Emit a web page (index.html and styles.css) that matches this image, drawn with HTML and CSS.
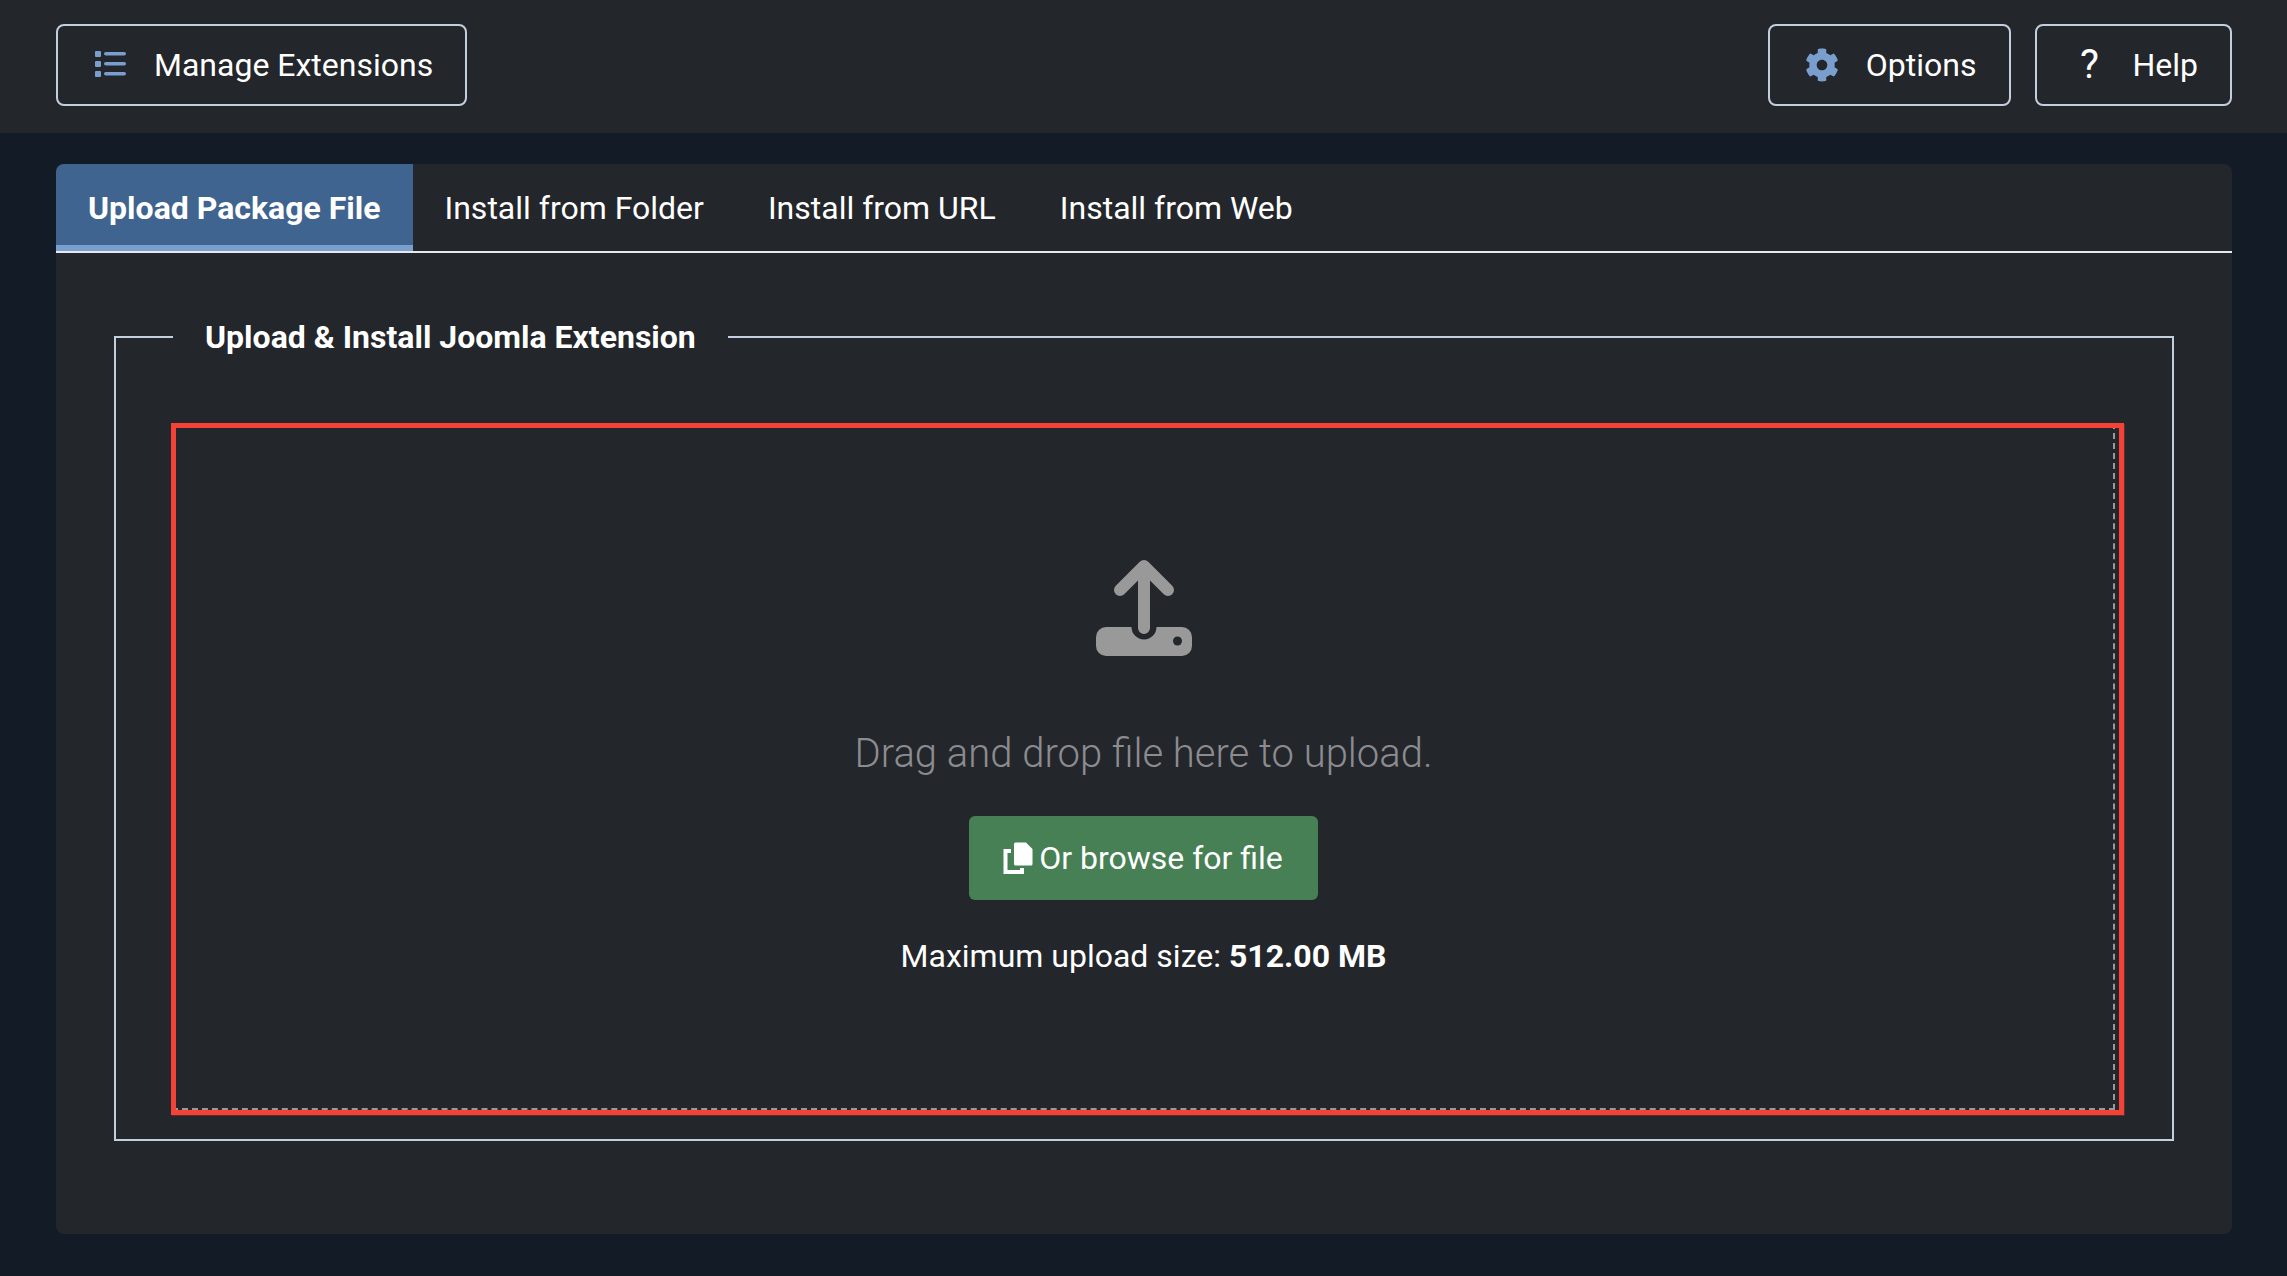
FILE: index.html
```html
<!DOCTYPE html>
<html lang="en">
<head>
<meta charset="utf-8">
<title>Extensions: Install</title>
<link rel="stylesheet" href="styles.css">
</head>
<body>
<header class="toolbar">
  <a class="btn btn-manage" href="#">
    <svg class="btn-icon" viewBox="0 0 40 34"><g class="icon-fill"><rect x="5" y="3" width="6" height="6" rx="1"/><rect x="5" y="13" width="6" height="6" rx="1"/><rect x="5" y="23" width="6" height="6" rx="1"/><rect x="14" y="4" width="22" height="3.600" rx="1.800"/><rect x="14" y="14" width="22" height="3.600" rx="1.800"/><rect x="14" y="24" width="22" height="3.600" rx="1.800"/></g></svg>
    <span>Manage Extensions</span>
  </a>
  <div class="toolbar-right">
    <a class="btn" href="#">
      <svg class="btn-icon" viewBox="0 0 512 512"><path class="icon-fill" d="M487.4 315.7l-42.6-24.6c4.3-23.2 4.3-47 0-70.2l42.6-24.6c4.9-2.8 7.1-8.6 5.5-14-11.1-35.6-30-67.8-54.7-94.6-3.8-4.1-10-5.1-14.8-2.3L380.8 110c-17.9-15.4-38.5-27.3-60.8-35.1V25.8c0-5.6-3.9-10.5-9.4-11.7-36.7-8.2-74.3-7.8-109.2 0-5.5 1.2-9.4 6.1-9.4 11.7V75c-22.2 7.9-42.8 19.8-60.8 35.1L88.7 85.5c-4.9-2.8-11-1.9-14.8 2.3-24.7 26.7-43.6 58.9-54.7 94.6-1.7 5.4.6 11.2 5.5 14L67.3 221c-4.3 23.2-4.3 47 0 70.2l-42.6 24.6c-4.9 2.8-7.1 8.6-5.5 14 11.1 35.6 30 67.8 54.7 94.6 3.8 4.1 10 5.1 14.8 2.3l42.6-24.6c17.9 15.4 38.5 27.3 60.8 35.1v49.2c0 5.6 3.9 10.5 9.4 11.7 36.7 8.2 74.3 7.8 109.2 0 5.5-1.2 9.4-6.1 9.4-11.7v-49.2c22.2-7.9 42.8-19.8 60.8-35.1l42.6 24.6c4.9 2.8 11 1.9 14.8-2.3 24.7-26.7 43.6-58.9 54.7-94.6 1.500-5.500-.7-11.300-5.600-14.100zM256 336c-44.100 0-80-35.900-80-80s35.900-80 80-80 80 35.900 80 80-35.900 80-80 80z"/></svg>
      <span>Options</span>
    </a>
    <a class="btn btn-help" href="#">
      <span class="btn-icon help-mark">?</span>
      <span>Help</span>
    </a>
  </div>
</header>
<main class="page">
  <section class="card">
    <nav class="tabs">
      <a class="tab tab-active" href="#">Upload Package File</a>
      <a class="tab" href="#">Install from Folder</a>
      <a class="tab" href="#">Install from URL</a>
      <a class="tab" href="#">Install from Web</a>
    </nav>
    <fieldset class="group">
      <legend class="group-title">Upload &amp; Install Joomla Extension</legend>
      <div class="dropzone">
        <svg class="upload-icon" viewBox="0 0 96 96">
          <rect class="upload-fill" x="0" y="67" width="96" height="29" rx="10"/>
          <circle class="upload-cut" cx="48" cy="67" r="12.500"/>
          <circle class="upload-cut" cx="81.500" cy="81" r="4.500"/>
          <path class="upload-stroke" d="M48 68V7M24 30L48 6l24 24"/>
        </svg>
        <p class="drop-text">Drag and drop file here to upload.</p>
        <button class="browse" type="button">
          <svg class="browse-icon" viewBox="0 0 30 32"><path class="browse-fill" d="M11 2a1.500 1.500 0 0 1 1.500-1.500H23l6.500 6.500v15a1.500 1.500 0 0 1-1.500 1.500H12.500A1.500 1.500 0 0 1 11 22z"/><path class="browse-line" d="M8 9H2.500v21h16.500v-4"/></svg>
          <span>Or browse for file</span>
        </button>
        <p class="max-size">Maximum upload size: <strong>512.00 MB</strong></p>
        <div class="highlight"></div>
      </div>
    </fieldset>
  </section>
</main>
</body>
</html>
```
FILE: styles.css
```css
* { box-sizing: border-box; }
html, body { margin: 0; height: 100%; }
body {
  background: #121b26;
  color: #fff;
  font-family: Roboto, "Liberation Sans", sans-serif;
  font-size: 32px;
  overflow: hidden;
}
a { color: inherit; text-decoration: none; }

.toolbar {
  display: flex;
  justify-content: space-between;
  align-items: flex-start;
  height: 133px;
  padding: 24px 55px 0 56px;
  background: #23262b;
}
.toolbar-right { display: flex; gap: 24px; }
.btn {
  display: flex;
  align-items: center;
  height: 82px;
  padding: 0 33px 0 32px;
  border: 2px solid #c3cfdf;
  border-radius: 8px;
  line-height: 48px;
  white-space: nowrap;
}
.btn-manage { padding-right: 32px; }
.btn-help { padding-right: 32px; }
.btn-icon { width: 40px; height: 34px; margin-right: 24px; flex: none; }
.btn-help .btn-icon { margin-right: 23px; }
.icon-fill { fill: #7a9fcf; }
.help-mark { text-align: center; font-size: 40px; line-height: 34px; }

.page { padding: 31px 55px 0 56px; }
.card {
  height: 1070px;
  background: #23262b;
  border-radius: 8px;
  overflow: hidden;
}
.tabs {
  display: flex;
  height: 89px;
  border-bottom: 2px solid #e6e9ee;
}
.tab {
  display: flex;
  align-items: center;
  padding: 0 32px;
  height: 87px;
  line-height: 48px;
  white-space: nowrap;
}
.tab-active {
  padding: 6px 33px 0 32px;
  margin-right: -1px;
  font-weight: 700;
  background: #3f6490;
  border-bottom: 6px solid #7a9fcf;
}

.group {
  margin: 60px 58px 0;
  padding: 0;
  min-width: 0;
  border: 2px solid #c3cfdf;
}
.group-title {
  margin-left: 57px;
  padding: 0 32px;
  font-weight: 700;
  line-height: 48px;
}
.dropzone {
  position: relative;
  margin: 62px 57px 29px 56px;
  padding: 135px 0 128px;
  border: 2px dashed #999;
  text-align: center;
}
.upload-icon { display: block; width: 98px; height: 96px; margin: 0 auto; }
.upload-fill { fill: #999; }
.upload-cut { fill: #23262b; }
.upload-stroke { fill: none; stroke: #999; stroke-width: 12; stroke-linecap: round; stroke-linejoin: round; }
.drop-text {
  margin: 74px 0 38px;
  font-size: 40px;
  font-weight: 300;
  line-height: 48px;
  color: #8c8c90;
}
.browse {
  display: inline-flex;
  align-items: center;
  height: 84px;
  padding: 0 35px 0 34px;
  border: 0;
  border-radius: 6px;
  background: #468054;
  color: #fff;
  font: inherit;
  line-height: 48px;
}
.browse-icon { width: 30px; height: 32px; margin-right: 6px; }
.browse-fill { fill: #fff; }
.browse-line { fill: none; stroke: #fff; stroke-width: 4; }
.max-size { margin: 32px 0 0; line-height: 48px; }
.max-size strong { font-weight: 700; }
.highlight {
  position: absolute;
  top: -2px;
  left: -3px;
  right: -11px;
  bottom: -7px;
  border: 5px solid #f44336;
  box-shadow: 1px 1px 0 rgba(244, 67, 54, .25);
  pointer-events: none;
}
```
